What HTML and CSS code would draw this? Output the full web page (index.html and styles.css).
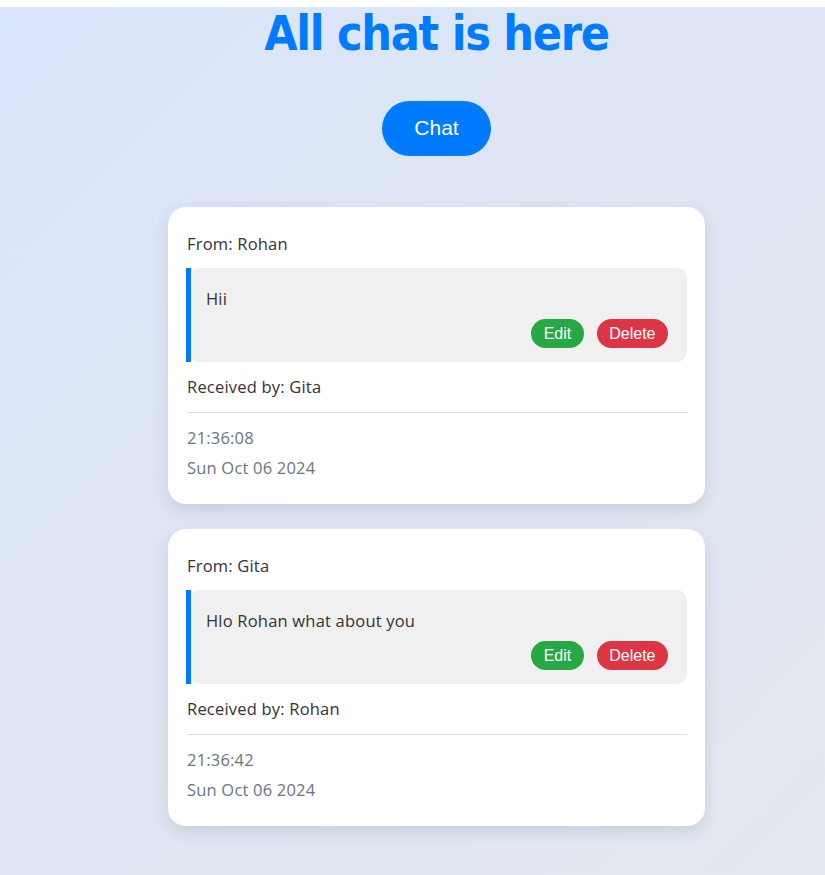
FILE: index.html
```html
<!DOCTYPE html>
<html lang="en">
<head>
<meta charset="utf-8">
<title>All chats</title>
<link rel="stylesheet" href="styles.css">
</head>
<body>
<div class="page">
  <h1 class="title">All chat is here</h1>
  <div class="actions"><button class="btn-chat">Chat</button></div>
  <div class="chats">
    <div class="card">
      <p class="from">From: Rohan</p>
      <div class="msg">
        <span class="msg-bar"></span>
        <div class="msg-box">
          <p class="msg-text">Hii</p>
          <div class="msg-actions">
            <button class="btn btn-edit">Edit</button>
            <button class="btn btn-delete">Delete</button>
          </div>
        </div>
      </div>
      <p class="to">Received by: Gita</p>
      <hr class="sep">
      <p class="meta">21:36:08</p>
      <p class="meta">Sun Oct 06 2024</p>
    </div>
    <div class="card">
      <p class="from">From: Gita</p>
      <div class="msg">
        <span class="msg-bar"></span>
        <div class="msg-box">
          <p class="msg-text">Hlo Rohan what about you</p>
          <div class="msg-actions">
            <button class="btn btn-edit">Edit</button>
            <button class="btn btn-delete">Delete</button>
          </div>
        </div>
      </div>
      <p class="to">Received by: Rohan</p>
      <hr class="sep">
      <p class="meta">21:36:42</p>
      <p class="meta">Sun Oct 06 2024</p>
    </div>
  </div>
</div>
</body>
</html>
```
FILE: styles.css
```css
html {
  background: #ffffff;
}
body {
  margin: 7px 0 0 0;
  min-height: 868px;
  background: linear-gradient(135deg, #d9e5fb 0%, #dfe6f3 50%, #e4e8f0 100%);
  font-family: "Open Sans", "Noto Sans", sans-serif;
  color: #333333;
}
.page {
  padding: 0 0 40px 48px;
  display: flex;
  flex-direction: column;
  align-items: center;
}
.title {
  margin: 0;
  font-family: "DejaVu Sans Condensed", "DejaVu Sans", sans-serif;
  font-weight: bold;
  font-size: 48px;
  line-height: 52px;
  color: #007bff;
  letter-spacing: -1.3px;
}
.actions {
  margin-top: 42px;
}
.btn-chat {
  font-family: "Liberation Sans", Arial, sans-serif;
  font-size: 21px;
  color: #ffffff;
  background: #007bff;
  border: none;
  border-radius: 28px;
  padding: 15px 32px 16px;
  cursor: pointer;
}
.chats {
  margin-top: 51px;
  display: flex;
  flex-direction: column;
  gap: 25px;
}
.card {
  width: 500px;
  background: #ffffff;
  border-radius: 18px;
  padding: 25px 18px 21px 19px;
  box-shadow: 0 6px 16px rgba(40, 60, 100, 0.14);
}
.card p {
  margin: 0;
  font-size: 16.5px;
  letter-spacing: 0.2px;
}
.from, .to {
  line-height: 24px;
}
.msg {
  margin: 12px 0 13px -1px;
  display: flex;
}
.msg-bar {
  width: 5px;
  background: #007bff;
  flex: none;
}
.msg-box {
  flex: 1;
  background: #f0f0f0;
  border-radius: 8px 10px 10px 8px;
  padding: 19px 19px 14px 15px;
}
.card .msg-text {
  line-height: 24px;
  margin-bottom: 8px;
}
.msg-actions {
  display: flex;
  justify-content: flex-end;
  gap: 13px;
}
.btn {
  font-family: "Liberation Sans", Arial, sans-serif;
  font-size: 16px;
  line-height: 19px;
  color: #ffffff;
  border: none;
  border-radius: 15px;
  padding: 5px 12.5px;
  cursor: pointer;
}
.btn-edit {
  background: #28a745;
}
.btn-delete {
  background: #dc3545;
}
.sep {
  margin: 13px 0 0;
  border: none;
  border-top: 1px solid #dddddd;
}
.card .meta {
  line-height: 30px;
  color: #6c757d;
}
.sep + .meta {
  margin-top: 10px;
}
```
